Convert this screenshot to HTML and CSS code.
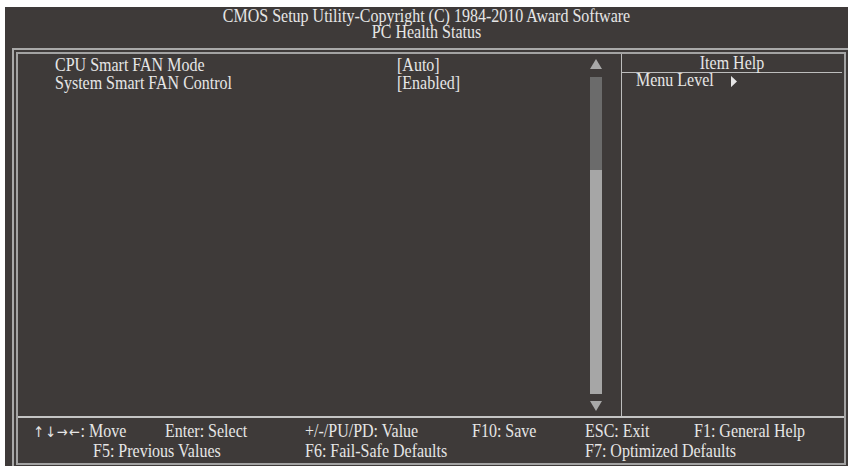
FILE: index.html
```html
<!DOCTYPE html>
<html>
<head>
	<meta charset="UTF-8">
	<title>PC Health Status</title>
	<link rel="stylesheet" href="styles.css">
</head>
<body>
<div class="screen">
	<div class="title">
		<div class="tl">CMOS Setup Utility-Copyright (C) 1984-2010 Award Software</div>
		<div class="tl">PC Health Status</div>
	</div>
	<div class="frame">
		<div class="inner">
			<div class="main">
				<div class="list">
					<div class="row"><span class="name">CPU Smart FAN Mode</span><span class="val">[Auto]</span></div>
					<div class="row"><span class="name">System Smart FAN Control</span><span class="val">[Enabled]</span></div>
				</div>
				<div class="scroll">
					<svg class="arrow" width="12" height="10" viewBox="0 0 12 10"><polygon points="6,0 12,10 0,10" fill="#a8a8a8"/></svg>
					<div class="track">
						<div class="thumb-top"></div>
						<div class="thumb"></div>
					</div>
					<svg class="arrow" width="12" height="10" viewBox="0 0 12 10"><polygon points="0,0 12,0 6,10" fill="#a8a8a8"/></svg>
				</div>
				<div class="help">
					<div class="help-head"><div class="hl">Item Help</div></div>
					<div class="help-line hl">Menu Level <svg class="tri" width="6" height="10" viewBox="0 0 6 10"><polygon points="0,0 6,5 0,10" fill="#e6e6e6"/></svg></div>
				</div>
			</div>
			<div class="footer">
				<span><span class="arr">↑↓→←</span>: Move</span>
				<span>Enter: Select</span>
				<span>+/-/PU/PD: Value</span>
				<span>F10: Save</span>
				<span>ESC: Exit</span>
				<span>F1: General Help</span>
				<span class="f5">F5: Previous Values</span>
				<span class="f6">F6: Fail-Safe Defaults</span>
				<span class="f7">F7: Optimized Defaults</span>
			</div>
		</div>
	</div>
</div>
</body>
</html>
```

FILE: styles.css
```css
html,body{
	margin: 0;
	padding: 0;
	background: #fff;
	overflow: hidden;
}
.screen{
	margin: 7px 0 0 5px;
	height: 470px;
	background: #3e3a39;
	color: #e6e6e6;
	font-family: "Liberation Serif", "Times New Roman", serif;
	font-size: 16px;
}
/* the bios font is taller than times, stretch the text a bit */
.tl,.row,.hl,.footer > span{
	transform: scaleY(1.12);
}
.title{
	padding-top: 2px;
	line-height: 16px;
	text-align: center;
}
.tl{
	transform-origin: 50% 13px;
}
.frame{
	margin: 7px 0 0 7px;
	width: 830px;
	border: 2px solid #a9a9a9;
	border-bottom: none;
	padding: 2px 2px 10px 2px;
}
.inner{
	border: 2px solid #a3a3a3;
}
.main{
	display: flex;
	height: 362px;
}
.list{
	width: 535px;
	padding: 3px 0 0 37px;
	line-height: 18px;
}
.row{
	display: flex;
	transform-origin: 50% 14px;
}
.name{
	width: 342px;
}
.scroll{
	width: 12px;
	margin-right: 19px;
	padding-top: 5px;
	display: flex;
	flex-direction: column;
}
.arrow{
	display: block;
}
.track{
	margin: 8px 0 7px;
	height: 317px;
	display: flex;
	flex-direction: column;
}
.thumb-top{
	height: 93px;
	background: #6b6b6b;
}
.thumb{
	flex: 1;
	background: #a6a6a6;
}
.help{
	flex: 1;
	border-left: 1px solid #bdbdbd;
	line-height: 16px;
}
.help-head{
	text-align: center;
	padding-top: 2px;
	margin-right: 2px;
	border-bottom: 1px solid #bdbdbd;
}
.hl{
	transform-origin: 50% 13px;
}
.help-line{
	padding-left: 14px;
}
.tri{
	margin-left: 13px;
	vertical-align: -1px;
}
.footer{
	border-top: 2px solid #c4c4c4;
	padding: 4px 0 2px 15px;
	line-height: 19px;
	display: grid;
	grid-template-columns: 132px 140px 167px 113px 109px 1fr;
	white-space: nowrap;
}
.footer > span{
	transform-origin: 50% 15px;
}
.arr{
	font-family: "DejaVu Sans", sans-serif;
	font-size: 13px;
	letter-spacing: 1px;
}
.f5{
	grid-column: 1 / 3;
	padding-left: 60px;
}
.f6{
	grid-column: 3 / 5;
}
.f7{
	grid-column: 5 / 7;
}
```
